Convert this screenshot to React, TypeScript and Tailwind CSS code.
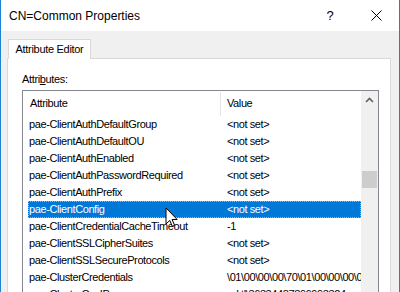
import React from "react";

const rows: { a: string; v: string; sel?: boolean }[] = [
  { a: "pae-ClientAuthDefaultGroup", v: "<not set>" },
  { a: "pae-ClientAuthDefaultOU", v: "<not set>" },
  { a: "pae-ClientAuthEnabled", v: "<not set>" },
  { a: "pae-ClientAuthPasswordRequired", v: "<not set>" },
  { a: "pae-ClientAuthPrefix", v: "<not set>" },
  { a: "pae-ClientConfig", v: "<not set>", sel: true },
  { a: "pae-ClientCredentialCacheTimeout", v: "-1" },
  { a: "pae-ClientSSLCipherSuites", v: "<not set>" },
  { a: "pae-ClientSSLSecureProtocols", v: "<not set>" },
  { a: "pae-ClusterCredentials", v: "\\01\\00\\00\\00\\70\\01\\00\\00\\00\\00" },
  { a: "pae-ClusterCsnIP", v: "ed:tl\\36334487896993324" },
];

export default function App() {
  return (
    <div
      className="relative w-[400px] h-[292px] overflow-hidden border-x border-[#1883d7] bg-[#f0f0f0] flex flex-col text-black"
      style={{ fontFamily: '"Liberation Sans", Arial, sans-serif' }}
    >
      {/* Title bar */}
      <div className="h-[31px] shrink-0 bg-white flex items-center">
        <div className="flex-1 pl-[8px] text-[12px] leading-none">CN=Common Properties</div>
        <div className="w-[46px] h-full flex items-center justify-center text-[13px] leading-none">?</div>
        <div className="w-[46px] h-full flex items-center justify-center">
          <svg width="11" height="11" viewBox="0 0 11 11">
            <path d="M0.5 0.5 L10.5 10.5 M10.5 0.5 L0.5 10.5" stroke="#000" strokeWidth="1" fill="none" />
          </svg>
        </div>
      </div>

      {/* Body */}
      <div className="flex-1 px-[6px] pt-[8px] flex flex-col">
        <div className="ml-[1px] w-[83px] h-[20px] relative z-10 bg-white border-t border-x border-[#d9d9d9] flex items-center justify-center text-[11px] tracking-[-0.3px] leading-none">
          Attribute Editor
        </div>
        <div className="-mt-px w-[384px] h-[260px] shrink-0 bg-white border border-[#d9d9d9] pl-[14px] pt-[13px]">
          <div className="h-[14px] flex items-center text-[11px] tracking-[-0.35px] leading-none">
            Attri<span className="underline">b</span>utes:
          </div>
          <div className="mt-[4px] w-[357px] h-[220px] border border-[#828790] flex">
            <div className="flex-1 overflow-hidden">
              <div className="h-[25px] flex items-center text-[11px] tracking-[-0.4px] leading-none">
                <div className="w-[197px] pl-[7px]">Attribute</div>
                <div className="w-px h-[24px] self-end bg-[#e5e5e5]" />
                <div className="pl-[6px]">Value</div>
              </div>
              <div className="pl-[5px]">
                {rows.map((r) => (
                  <div
                    key={r.a}
                    className={
                      r.sel
                        ? "h-[17px] flex items-center text-[11px] tracking-[-0.4px] leading-none whitespace-nowrap bg-[#0078d7] text-white outline-1 outline-dotted outline-[#e9a565] -outline-offset-1"
                        : "h-[17px] flex items-center text-[11px] tracking-[-0.4px] leading-none whitespace-nowrap"
                    }
                  >
                    <div className="w-[198px] shrink-0 pl-[1px]">{r.a}</div>
                    <div className="pl-[1px]">{r.v}</div>
                  </div>
                ))}
              </div>
            </div>
            <div className="w-[17px] shrink-0 bg-[#f0f0f0] flex flex-col">
              <div className="h-[17px] flex items-center justify-center">
                <svg width="9" height="6" viewBox="0 0 9 6">
                  <path d="M1 5 L4.5 1.5 L8 5" stroke="#606060" strokeWidth="1.6" fill="none" />
                </svg>
              </div>
              <div className="mt-[63px] mx-px h-[17px] bg-[#cdcdcd]" />
            </div>
          </div>
        </div>
      </div>

      {/* Mouse cursor */}
      <svg className="absolute left-[164px] top-[207px]" width="14" height="21" viewBox="0 0 14 21">
        <path
          d="M1 1 L1 17 L4.8 13.4 L7.3 19.3 L9.6 18.3 L7.1 12.5 L12.2 12.5 Z"
          fill="#fff"
          stroke="#000"
          strokeWidth="1"
          strokeLinejoin="miter"
        />
      </svg>
    </div>
  );
}
